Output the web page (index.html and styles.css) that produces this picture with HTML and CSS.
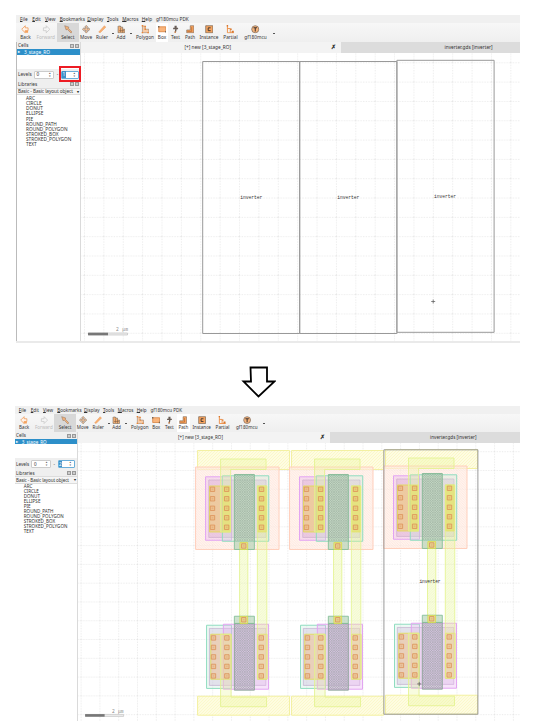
FILE: index.html
```html
<!DOCTYPE html>
<html lang="en">
<head>
<meta charset="utf-8">
<title>Layout hierarchy levels</title>
<link rel="stylesheet" href="styles.css">
</head>
<body>
<svg class="defs" width="0" height="0">
  <defs>
    <symbol id="i-back" viewBox="0 0 12 12"><path d="M6 1 1 6l5 5V8h4V4H6z" fill="#fff3e8" stroke="#ee9148"/><path d="M6 8h4v3H6z" fill="#f5a15b"/></symbol>
    <symbol id="i-forward" viewBox="0 0 12 12"><path d="m6 1 5 5-5 5V8H2V4h4z" fill="#f5f5f5" stroke="#c5c5c5"/></symbol>
    <symbol id="i-select" viewBox="0 0 12 12"><path d="m1 1 2 6 1.500-1L10 11.500l1.500-1.500L6 4.500 7 3z" fill="#f3b27a" stroke="#8b6f5a" stroke-width=".7"/></symbol>
    <symbol id="i-move" viewBox="0 0 12 12"><path d="m6 .5 2.200 2.500H7v2h2V3.800L11.500 6 9 8.200V7H7v2h1.200L6 11.500 3.800 9H5V7H3v1.200L.5 6 3 3.800V5h2V3H3.800z" fill="#f9c79e" stroke="#76695e" stroke-width=".7"/></symbol>
    <symbol id="i-ruler" viewBox="0 0 12 12"><path d="m1 10 8-9 2 2-8 8z" fill="#f8b173" stroke="#e88b43" stroke-width=".6"/></symbol>
    <symbol id="i-add" viewBox="0 0 12 12"><path d="M1.500 2v9H11V6H8V3H5V1.500H2z" fill="#f6b175" stroke="#675d54" stroke-width=".8"/><path d="M3 8h7M5 4v6M8 6v5" stroke="#765b43" stroke-width=".8"/></symbol>
    <symbol id="i-polygon" viewBox="0 0 12 12"><path d="M2 1v10h9V6H6V2z" fill="#f9cba4" stroke="#8f7966" stroke-width=".8"/><path d="M1 0h2v2H1zM5 1h2v2H5zM1 10h2v2H1zM9 10h2v2H9zM5 5h2v2H5z" fill="#ef8430"/></symbol>
    <symbol id="i-box" viewBox="0 0 12 12"><path d="M1 2.500h10v7H1z" fill="#f9b57c" stroke="#d57830"/><path d="M0 1.500h2v2H0zM10 8.500h2v2h-2z" fill="#776657"/></symbol>
    <symbol id="i-text" viewBox="0 0 12 12"><path d="M5 1h3v3h2v2H8l-1 5H5l1-5H3V4h2z" fill="#685d56"/><path d="M5 9h2v2H5z" fill="#ef934e"/></symbol>
    <symbol id="i-path" viewBox="0 0 12 12"><path d="M1 7h5V1h5v10H1z" fill="#f6a25d" stroke="#766150" stroke-width=".8"/><path d="M2 9h6V3" fill="none" stroke="#a85b24" stroke-width=".8"/></symbol>
    <symbol id="i-instance" viewBox="0 0 12 12"><path d="M1 1h10v10H1z" fill="#f7a45f" stroke="#776351"/><path d="M8 4H4.500v4H8" fill="none" stroke="#37322f" stroke-width="1.300"/></symbol>
    <symbol id="i-partial" viewBox="0 0 12 12"><path d="M2 1v10h9M2 5h4v6" fill="none" stroke="#ee8b3f" stroke-width="1.300"/><path d="M6 5h2v2H6zM8 8h3v3H8zM1 0h2v2H1z" fill="#d7772e"/></symbol>
    <symbol id="i-pdk" viewBox="0 0 12 12"><circle cx="6" cy="6" r="5" fill="#f7b47c" stroke="#796657"/><path d="M3.500 4h5M6 4v5" stroke="#3e3530" stroke-width="1.500"/></symbol>

    <pattern id="h-yellow" width="3" height="3" patternUnits="userSpaceOnUse"><path d="M0 3 3 0" stroke="#f4ee8c" stroke-width=".6"/></pattern>
    <pattern id="h-well" width="2.500" height="2.500" patternUnits="userSpaceOnUse"><path d="m0 0 2.500 2.500" stroke="#ffc3ad" stroke-width=".6"/></pattern>
    <pattern id="h-lime" width="2.500" height="2.500" patternUnits="userSpaceOnUse"><path d="M0 2.500 2.500 0" stroke="#d8f078" stroke-width=".6"/></pattern>
    <pattern id="h-gate" width="2.400" height="2.400" patternUnits="userSpaceOnUse"><path d="m0 0 2.400 2.400M0 2.400 2.400 0" stroke="#718576" stroke-width=".5"/></pattern>

    <g id="contact"><path class="contact" d="M-2.200-2.200h4.400v4.400h-4.400z"/><path class="contact-core" d="M-.8-.8H.8V.8H-.8z"/></g>
    <g id="contacts">
      <use href="#contact" y="0"/><use href="#contact" y="9.500"/><use href="#contact" y="19"/><use href="#contact" y="28.500"/><use href="#contact" y="38"/>
    </g>
    <g id="inverter">
      <path class="rail" d="M197.500 450.500h92v19h-92z"/>
      <path class="hatch-yellow" d="M197.500 450.500h92v19h-92z"/>
      <path class="rail" d="M197.500 696.300h92v19h-92z"/>
      <path class="hatch-yellow" d="M197.500 696.300h92v19h-92z"/>
      <path class="well" d="M195.500 467h83.500v82.500h-83.500z"/>
      <path class="hatch-well" d="M195.500 467h83.500v82.500h-83.500z"/>
      <path class="implant-p" d="M205.500 476.800h26v63.500h-26z"/>
      <path class="active-top" d="M208.700 480h57.300v57.500h-57.300z"/>
      <path class="implant-n" d="M222.300 475.800h46.400v65.500h-46.400z"/>
      <path class="implant-n" d="M206.500 625.300h25v63.200h-25z"/>
      <path class="active-low" d="M209.300 628.500h56.500v57h-56.500z"/>
      <path class="implant-p" d="M223.300 624.300h45.200v65h-45.200z"/>
      <path class="metal" d="M209.500 486h21v46h-21zM257.500 486h9v46h-9z"/>
      <path class="metal low" d="M210.700 634.300h20.300v45h-20.300zM257.500 634.300h9.500v45h-9.500z"/>
      <path class="strap" d="M222.500 486h8v46h-8zM257.500 486h9v46h-9z"/>
      <path class="lime" d="M220.500 459h45.500v10.500h-35.500v62.500h-10z"/>
      <path class="lime" d="M220.500 634.300h10.500v63h35.500v9.500h-46z"/>
      <path class="lime" d="M257.300 486h9.500v193h-9.500zM239.500 543h8.300v81h-8.300z"/>
      <path class="hatch-lime" d="M257.300 532h9.500v102h-9.500zM239.500 549h8.300v68h-8.300z"/>
      <path class="gate" d="M234.300 474.500h20v75h-20z"/>
      <path class="hatch-gate" d="M234.300 474.500h20v67h-20z"/>
      <path class="gate low" d="M234.300 623.500h20v66.800h-20z"/>
      <path class="gate" d="M234.300 616.300h20v7.200h-20z"/>
      <path class="hatch-gate" d="M234.300 624h20v66h-20z"/>
      <path class="metal tap" d="M240 542.500h7.500v7H240zM240 616.500h7.500v7H240z"/>
      <use href="#contacts" x="212.400" y="489.300"/><use href="#contacts" x="226.600" y="489.300"/><use href="#contacts" x="261.500" y="489.300"/>
      <use href="#contacts" x="213.400" y="638"/><use href="#contacts" x="226.800" y="638"/><use href="#contacts" x="261.200" y="638"/>
      <use href="#contact" x="243.700" y="546"/><use href="#contact" x="243.700" y="619.800"/>
    </g>
  </defs>
</svg>

<main class="page">
  <section class="window first">
    <nav class="menu"><span><u>F</u>ile</span><span><u>E</u>dit</span><span><u>V</u>iew</span><span><u>B</u>ookmarks</span><span><u>D</u>isplay</span><span><u>T</u>ools</span><span><u>M</u>acros</span><span><u>H</u>elp</span><span>gf180mcu PDK</span></nav>
    <div class="toolbar">
      <div class="tool"><svg><use href="#i-back"/></svg><span>Back</span></div>
      <div class="tool off"><svg><use href="#i-forward"/></svg><span>Forward</span></div>
      <div class="tool pressed"><svg><use href="#i-select"/></svg><span>Select</span></div>
      <div class="tool"><svg><use href="#i-move"/></svg><span>Move</span></div>
      <div class="tool"><svg><use href="#i-ruler"/></svg><span>Ruler</span></div>
      <i class="more"></i>
      <div class="tool"><svg><use href="#i-add"/></svg><span>Add</span></div>
      <i class="more"></i>
      <div class="tool"><svg><use href="#i-polygon"/></svg><span>Polygon</span></div>
      <div class="tool lit"><svg><use href="#i-box"/></svg><span>Box</span></div>
      <div class="tool"><svg><use href="#i-text"/></svg><span>Text</span></div>
      <div class="tool"><svg><use href="#i-path"/></svg><span>Path</span></div>
      <div class="tool"><svg><use href="#i-instance"/></svg><span>Instance</span></div>
      <div class="tool"><svg><use href="#i-partial"/></svg><span>Partial</span></div>
      <div class="tool"><svg><use href="#i-pdk"/></svg><span>gf180mcu</span></div>
      <i class="more"></i>
    </div>
    <div class="body">
      <aside class="dock">
        <header><span>Cells</span><i></i><i></i></header>
        <div class="cells"><div class="row"><b>▸</b>3_stage_RO</div></div>
        <div class="levels"><span>Levels</span><div class="spin">0</div><span class="dash">-</span><div class="spin focus"><mark>1</mark></div><div class="callout"></div></div>
        <header><span>Libraries</span><i></i><i></i></header>
        <div class="combo"><span>Basic - Basic layout object</span><b>▾</b></div>
        <ul><li>ARC</li><li>CIRCLE</li><li>DONUT</li><li>ELLIPSE</li><li>PIE</li><li>ROUND_PATH</li><li>ROUND_POLYGON</li><li>STROKED_BOX</li><li>STROKED_POLYGON</li><li>TEXT</li></ul>
      </aside>
      <div class="view">
        <div class="tabs"><div class="tab active"><span>[+] new [3_stage_RO]</span><b>✗</b></div><div class="tab"><span>inverter.gds [inverter]</span></div></div>
        <svg class="canvas" viewBox="81 53 439 288">
          <defs><pattern id="grid1" x="84" y="62.300" width="19.380" height="19.320" patternUnits="userSpaceOnUse"><path class="grid" d="M.5 0v19.400M0 .5h19.400"/></pattern></defs>
          <path fill="url(#grid1)" d="M81 53h439v288H81z"/>
          <path class="outline" d="M202.700 61.500h97v272h-97zM299.700 61.500h97.200v272h-97.200zM396.900 60.300h97.200v272h-97.200z"/>
          <text class="cell-name" x="240.300" y="198.500" textLength="22">inverter</text>
          <text class="cell-name" x="337.300" y="198.500" textLength="22">inverter</text>
          <text class="cell-name" x="434" y="197.500" textLength="22">inverter</text>
          <path class="cross" d="M431.200 301.500h4M433.200 299.500v4"/>
          <text class="scale" x="116" y="331.300" textLength="12">2 μm</text>
          <path class="bar" d="M88.500 333h39v2h-39z"/><path class="bar-fill" d="M88 332.700h20v2.600H88z"/>
        </svg>
      </div>
    </div>
    <footer class="status"></footer>
  </section>

  <svg class="arrow" viewBox="0 0 36 34"><path d="M10.500 2.500H27V16.500h7.500L18.500 31.500 3.500 16.500H11z"/></svg>

  <section class="window second">
    <nav class="menu"><span><u>F</u>ile</span><span><u>E</u>dit</span><span><u>V</u>iew</span><span><u>B</u>ookmarks</span><span><u>D</u>isplay</span><span><u>T</u>ools</span><span><u>M</u>acros</span><span><u>H</u>elp</span><span>gf180mcu PDK</span></nav>
    <div class="toolbar">
      <div class="tool"><svg><use href="#i-back"/></svg><span>Back</span></div>
      <div class="tool off"><svg><use href="#i-forward"/></svg><span>Forward</span></div>
      <div class="tool pressed"><svg><use href="#i-select"/></svg><span>Select</span></div>
      <div class="tool"><svg><use href="#i-move"/></svg><span>Move</span></div>
      <div class="tool"><svg><use href="#i-ruler"/></svg><span>Ruler</span></div>
      <i class="more"></i>
      <div class="tool"><svg><use href="#i-add"/></svg><span>Add</span></div>
      <i class="more"></i>
      <div class="tool"><svg><use href="#i-polygon"/></svg><span>Polygon</span></div>
      <div class="tool"><svg><use href="#i-box"/></svg><span>Box</span></div>
      <div class="tool"><svg><use href="#i-text"/></svg><span>Text</span></div>
      <div class="tool lit"><svg><use href="#i-path"/></svg><span>Path</span></div>
      <div class="tool"><svg><use href="#i-instance"/></svg><span>Instance</span></div>
      <div class="tool"><svg><use href="#i-partial"/></svg><span>Partial</span></div>
      <div class="tool"><svg><use href="#i-pdk"/></svg><span>gf180mcu</span></div>
      <i class="more"></i>
    </div>
    <div class="body">
      <aside class="dock">
        <header><span>Cells</span><i></i><i></i></header>
        <div class="cells"><div class="row"><b>▸</b>3_stage_RO</div></div>
        <div class="levels"><span>Levels</span><div class="spin">0</div><span class="dash">-</span><div class="spin focus"><mark>2</mark></div></div>
        <header><span>Libraries</span><i></i><i></i></header>
        <div class="combo"><span>Basic - Basic layout object</span><b>▾</b></div>
        <ul><li>ARC</li><li>CIRCLE</li><li>DONUT</li><li>ELLIPSE</li><li>PIE</li><li>ROUND_PATH</li><li>ROUND_POLYGON</li><li>STROKED_BOX</li><li>STROKED_POLYGON</li><li>TEXT</li></ul>
      </aside>
      <div class="view">
        <div class="tabs"><div class="tab active"><span>[+] new [3_stage_RO]</span><b>✗</b></div><div class="tab"><span>inverter.gds [inverter]</span></div></div>
        <svg class="canvas" viewBox="78 443 442 278">
          <defs><pattern id="grid2" x="80.500" y="451.200" width="18.800" height="18.790" patternUnits="userSpaceOnUse"><path class="grid" d="M.5 0v18.800M0 .5h18.800"/></pattern></defs>
          <path fill="url(#grid2)" d="M78 443h442v278H78z"/>
          <use href="#inverter"/>
          <use href="#inverter" x="94"/>
          <use href="#inverter" x="188" y="-1"/>
          <path class="outline" d="M383.900 449.800h94v264.500h-94z"/>
          <text class="cell-name" x="419.500" y="582.800" textLength="21">inverter</text>
          <path class="cross" d="M417.200 684h4M419.200 682v4"/>
          <text class="scale" x="112" y="712.800" textLength="11.500">2 μm</text>
          <path class="bar" d="M85.500 714.500h38v2h-38z"/><path class="bar-fill" d="M85 714.200h19.500v2.600H85z"/>
        </svg>
      </div>
    </div>
  </section>
</main>
</body>
</html>
```
FILE: styles.css
```css
* { box-sizing: border-box; }
body { margin: 0; background: #fff; font-family: "Noto Sans", sans-serif; color: #333; }
.defs { display: block; }
.page { display: flex; flex-direction: column; width: 533px; height: 728px; padding-top: 15px; overflow: hidden; }

.window { --u: 1px; display: flex; flex-direction: column; flex: none; width: 504px; height: 328px; margin-left: 16px; font-size: calc(var(--u) * 4.75); line-height: 1; }
.window.second { --u: .968px; width: 505px; height: 315px; margin-left: 15px; }

.menu { display: grid; grid-template-columns: calc(var(--u) * 12.3) calc(var(--u) * 12.7) calc(var(--u) * 14.7) calc(var(--u) * 27.6) calc(var(--u) * 19.7) calc(var(--u) * 15.2) calc(var(--u) * 19.6) calc(var(--u) * 14.2) auto; align-items: center; height: calc(var(--u) * 8); flex: none; padding-left: calc(var(--u) * 4); background: #f0f0f0; white-space: nowrap; }
.menu u { text-decoration-thickness: .4px; text-underline-offset: .4px; }

.toolbar { display: grid; grid-template-columns: calc(var(--u) * 19) calc(var(--u) * 21.5) calc(var(--u) * 22.5) calc(var(--u) * 14) calc(var(--u) * 18) calc(var(--u) * 4) calc(var(--u) * 12) calc(var(--u) * 7) calc(var(--u) * 22) calc(var(--u) * 12) calc(var(--u) * 15) calc(var(--u) * 14) calc(var(--u) * 24) calc(var(--u) * 19) calc(var(--u) * 31) calc(var(--u) * 5); height: calc(var(--u) * 19.3); flex: none; background: linear-gradient(#f7f7f7, #efefef); }
.tool { display: flex; flex-direction: column; align-items: center; padding-top: calc(var(--u) * 2); gap: calc(var(--u) * 1.6); white-space: nowrap; }
.tool svg { width: calc(var(--u) * 8.5); height: calc(var(--u) * 8.5); flex: none; }
.tool span { margin: 0 -8px; }
.tool.off { color: #bbb; }
.tool.pressed { background: #d8d8d8; }
.tool.lit { background: #fff; }
.more { width: 2px; height: 1px; margin: calc(var(--u) * 10) auto 0; background: #555; }

.body { display: flex; flex: 1; min-height: 0; }
.dock { display: flex; flex-direction: column; width: calc(var(--u) * 65); flex: none; background: #efefef; border-right: 1px solid #dadada; }
.first .dock { border-left: 1px solid #bbb; }
.dock header { display: flex; align-items: center; gap: 1px; height: calc(var(--u) * 7); flex: none; padding: 0 1px; }
.dock header span { flex: 1; }
.dock header i { width: 4px; height: 4px; border: .6px solid #999; background: #ccc; }
.cells { height: calc(var(--u) * 19.5); flex: none; background: #fff; }
.row { display: flex; align-items: center; gap: calc(var(--u) * 3); height: calc(var(--u) * 5.5); padding-left: 1px; background: #2d8fc9; color: #fff; }
.row b { width: calc(var(--u) * 3); font-size: .8em; }
.levels { position: relative; display: flex; align-items: center; height: calc(var(--u) * 12); flex: none; padding-left: 1px; }
.levels > span { width: calc(var(--u) * 15.5); }
.levels > .dash { width: calc(var(--u) * 7); text-align: center; }
.spin { display: flex; align-items: center; justify-content: space-between; width: calc(var(--u) * 20.5); height: calc(var(--u) * 8.5); padding-left: 2px; border: 1px solid #ccc; border-radius: 1px; background: #fff; }
.spin::after { content: "▴\A▾"; white-space: pre; width: 4px; font: calc(var(--u) * 3.2)/.95 "DejaVu Sans", sans-serif; color: #555; }
.spin.focus { width: calc(var(--u) * 17.5); padding-left: 0; border-color: #6baed8; }
.spin mark { background: #3d91c8; color: #fff; padding: 1px .5px; }
.callout { position: absolute; left: 42.3px; top: -2.5px; width: 22.2px; height: 15.3px; border: 2px solid #ed1c24; }
.combo { display: flex; align-items: center; justify-content: space-between; height: calc(var(--u) * 7.7); flex: none; padding: 0 1px; border-block: 1px solid #ddd; background: #f5f5f5; white-space: nowrap; }
.combo span { letter-spacing: -.08px; }
.combo b { font-size: .8em; }
.dock ul { flex: 1; margin: 0; padding: calc(var(--u) * .6) 0 0 calc(var(--u) * 9); background: #fff; list-style: none; }
.dock li { height: calc(var(--u) * 5.13); line-height: calc(var(--u) * 5.13); }

.view { display: flex; flex-direction: column; flex: 1; min-width: 0; }
.tabs { display: flex; height: 10.7px; flex: none; }
.tab { display: flex; align-items: center; flex: 1; padding-left: calc(var(--u) * 103.5); background: #dcdcdc; white-space: nowrap; }
.tab.active { flex: none; width: 260px; background: #f3f3f3; }
.second .tab.active { width: 252px; }
.tab.active span { flex: 1; }
.tab b { width: calc(var(--u) * 10); font-size: 1.25em; }
.canvas { display: block; width: 100%; flex: 1; min-height: 0; background: #fff; }
.status { height: 2px; background: #eaeaea; flex: none; }
.arrow { display: block; width: 36px; height: 34px; margin: 22px 0 7px 240px; flex: none; fill: #fff; stroke: #000; stroke-width: 1.8; }

.grid { fill: none; stroke: #dedede; stroke-width: .6; stroke-dasharray: 1.3 1.3; }
.outline { fill: none; stroke: #999; stroke-width: 1; }
.cell-name { font: 4.6px "Liberation Mono", monospace; fill: #333; }
.scale { font: 4.6px "Liberation Mono", monospace; fill: #888; }
.cross { fill: none; stroke: #555; stroke-width: .7; }
.bar { fill: #eee; stroke: #bbb; stroke-width: .6; }
.bar-fill { fill: #777; }

.rail { fill: #fefce2; stroke: #f2ee98; stroke-width: .9; }
.hatch-yellow { fill: url(#h-yellow); opacity: .5; }
.well { fill: #ffeee7; fill-opacity: .65; stroke: #ffcfbc; }
.hatch-well { fill: url(#h-well); opacity: .4; }
.implant-p { fill: #eab4f2; fill-opacity: .36; stroke: #e2a4f2; }
.implant-n { fill: #c4ecdc; fill-opacity: .3; stroke: #90dcc0; }
.active-top { fill: #d5a8cc; fill-opacity: .36; stroke: #c9aac9; stroke-width: .6; }
.active-low { fill: #cbb3da; fill-opacity: .33; stroke: #bda5ca; stroke-width: .6; }
.metal { fill: #f0cc62; fill-opacity: .5; stroke: #e0dc4c; stroke-width: .8; }
.metal.low { fill: #efbd8c; }
.metal.tap { fill: #f5e27c; }
.strap { fill: #dfe04a; fill-opacity: .5; }
.lime { fill: #e8f79c; fill-opacity: .32; stroke: #e2f28c; stroke-width: .8; }
.hatch-lime { fill: url(#h-lime); opacity: .3; }
.gate { fill: #b2d3b6; fill-opacity: .65; stroke: #86bf98; stroke-width: .9; }
.gate.low { fill: #c5b9d0; stroke: #90a89c; }
.hatch-gate { fill: url(#h-gate); opacity: .5; }
.contact { fill: #f0b470; fill-opacity: .35; stroke: #dc9058; stroke-width: .8; }
.contact-core { fill: #dc9868; opacity: .4; }
```
